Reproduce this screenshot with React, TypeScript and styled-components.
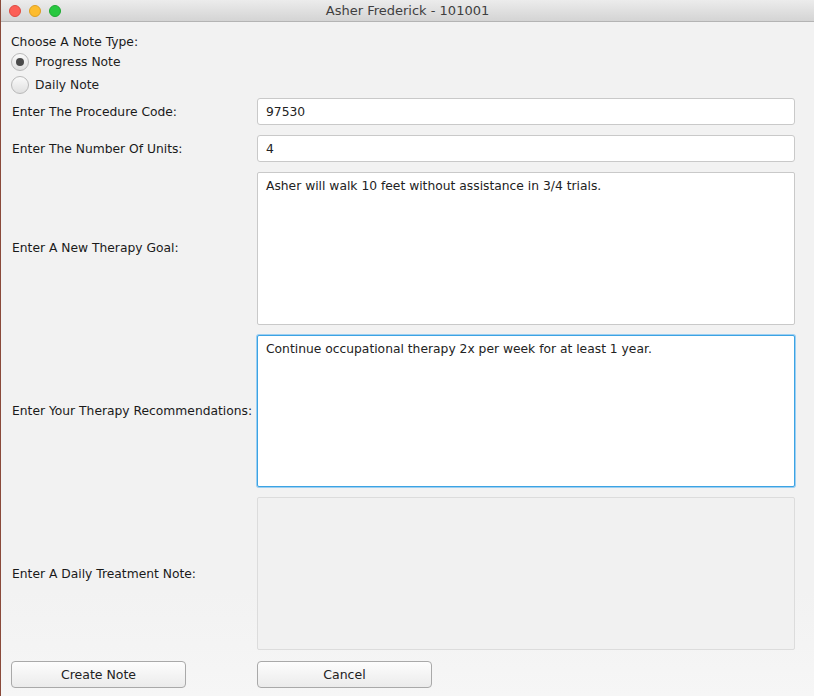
import React, { useState } from 'react';
import styled, { createGlobalStyle } from 'styled-components';

const GlobalStyle = createGlobalStyle`
  html, body {
    margin: 0;
    padding: 0;
    background: #f2f2f2;
  }
  * {
    box-sizing: border-box;
  }
`;

const Window = styled.div`
  width: 814px;
  height: 696px;
  background: linear-gradient(180deg, #f2f2f2 85%, #f6f6f6 100%);
  border-left: 1px solid #8a4a3a;
  font-family: 'DejaVu Sans', 'Liberation Sans', sans-serif;
  font-size: 12.3px;
  color: #1a1a1a;
  overflow: hidden;
`;

const TitleBar = styled.div`
  height: 22px;
  background: linear-gradient(180deg, #ececec 0%, #d4d4d4 100%);
  border-bottom: 1px solid #b4b4b4;
  display: flex;
  align-items: center;
  position: relative;
`;

const Lights = styled.div`
  display: flex;
  gap: 8px;
  padding-left: 8px;
`;

const Light = styled.span<{ $color: string; $edge: string }>`
  width: 12px;
  height: 12px;
  border-radius: 50%;
  background: ${(p) => p.$color};
  border: 0.5px solid ${(p) => p.$edge};
`;

const Title = styled.div`
  position: absolute;
  left: 0;
  right: 0;
  text-align: center;
  font-size: 13px;
  color: #3f3f3f;
  pointer-events: none;
`;

const Body = styled.div`
  padding: 12px 19px 0 10px;
`;

const Heading = styled.div`
  height: 16px;
  line-height: 16px;
`;

const RadioRow = styled.label`
  display: flex;
  align-items: center;
  gap: 6px;
  height: 23px;
  cursor: pointer;
  color: #222;
`;

const RadioDot = styled.span<{ $checked: boolean }>`
  width: 18px;
  height: 18px;
  border-radius: 50%;
  border: 1px solid #b9b9b9;
  background: linear-gradient(180deg, #fafafa 0%, #e0e0e0 100%);
  display: flex;
  align-items: center;
  justify-content: center;

  &::after {
    content: '';
    width: 8px;
    height: 8px;
    border-radius: 50%;
    background: ${(p) => (p.$checked ? '#4a4a4a' : 'transparent')};
  }
`;

const Form = styled.div`
  display: grid;
  grid-template-columns: 246px 1fr;
  row-gap: 10px;
  margin-top: 2px;
  align-items: center;
`;

const Label = styled.div`
  white-space: nowrap;
  padding-left: 1px;
`;

const TextField = styled.input`
  height: 27px;
  width: 100%;
  border: 1px solid #c9c9c9;
  border-radius: 3px;
  background: #fff;
  padding: 0 8px;
  font: inherit;
  color: #222;
  outline: none;
`;

const Area = styled.textarea<{ $focused?: boolean }>`
  display: block;
  width: 100%;
  height: 152.7px;
  resize: none;
  border: 1px solid ${(p) => (p.$focused ? '#3ca3e3' : '#c9c9c9')};
  box-shadow: ${(p) => (p.$focused ? '0 0 0 1px #9ccff2' : 'none')};
  border-radius: 2px;
  background: #fff;
  padding: 5px 8px;
  font: inherit;
  line-height: 16px;
  color: #222;
  outline: none;

  &:disabled {
    background: #f1f1f1;
    border-color: #dcdcdc;
  }
`;

const Button = styled.button`
  width: 175px;
  height: 27px;
  border: 1px solid #a9a9a9;
  border-radius: 4px;
  background: linear-gradient(180deg, #fdfdfd 0%, #ebebeb 100%);
  font: inherit;
  font-size: 12.5px;
  color: #222;
  cursor: pointer;
  margin-top: 1px;
`;

export default function App() {
  const [type, setType] = useState<'progress' | 'daily'>('progress');

  return (
    <>
      <GlobalStyle />
      <Window>
        <TitleBar>
          <Lights>
            <Light $color="#fc5f57" $edge="#de4a42" />
            <Light $color="#fdbc2e" $edge="#de9f22" />
            <Light $color="#28c840" $edge="#1ea932" />
          </Lights>
          <Title>Asher Frederick - 101001</Title>
        </TitleBar>
        <Body>
          <Heading>Choose A Note Type:</Heading>
          <RadioRow onClick={() => setType('progress')}>
            <RadioDot $checked={type === 'progress'} />
            Progress Note
          </RadioRow>
          <RadioRow onClick={() => setType('daily')}>
            <RadioDot $checked={type === 'daily'} />
            Daily Note
          </RadioRow>
          <Form>
            <Label>Enter The Procedure Code:</Label>
            <TextField defaultValue="97530" />
            <Label>Enter The Number Of Units:</Label>
            <TextField defaultValue="4" />
            <Label>Enter A New Therapy Goal:</Label>
            <Area defaultValue="Asher will walk 10 feet without assistance in 3/4 trials." />
            <Label>Enter Your Therapy Recommendations:</Label>
            <Area $focused defaultValue="Continue occupational therapy 2x per week for at least 1 year." />
            <Label>Enter A Daily Treatment Note:</Label>
            <Area disabled />
            <div>
              <Button>Create Note</Button>
            </div>
            <div>
              <Button>Cancel</Button>
            </div>
          </Form>
        </Body>
      </Window>
    </>
  );
}
